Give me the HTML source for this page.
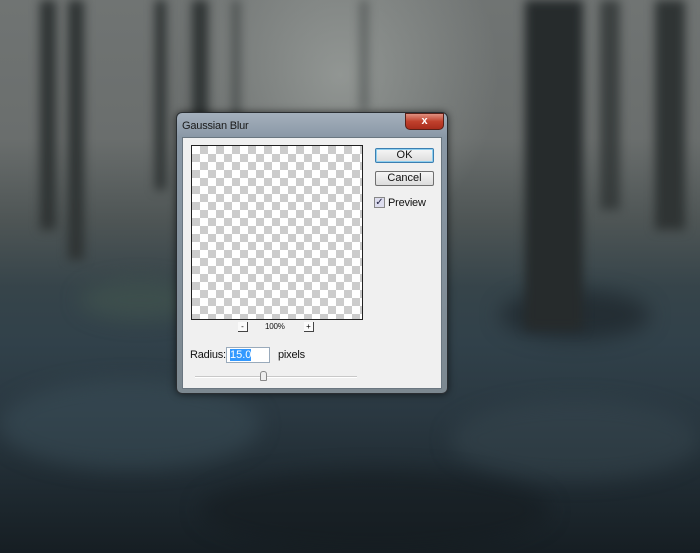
<!DOCTYPE html>
<html><head><style>
*{margin:0;padding:0;box-sizing:border-box}
body{width:700px;height:553px;overflow:hidden;position:relative;font-family:"Liberation Sans",sans-serif;
background:linear-gradient(180deg,#707473 0%,#6a6e6d 25%,#4e5555 40%,#36444a 52%,#31414a 62%,#2a3841 75%,#1f2a31 88%,#161e23 100%);}
.fog{position:absolute;left:180px;top:0;width:320px;height:250px;background:radial-gradient(ellipse at center 30%,rgba(190,195,190,.45),rgba(150,155,150,0) 70%)}
.p{position:absolute;border-radius:50%;filter:blur(10px)}
.t{position:absolute;top:0;background:#2f3434;filter:blur(5px)}
.dlg{position:absolute;left:176px;top:112px;width:272px;height:282px;border-radius:6px;
background:linear-gradient(180deg,#a4b0bc 0,#8a98a6 24px,#7c8890 100%);border:1px solid #2a2e32;box-shadow:0 0 8px rgba(0,0,0,.6)}
.title{position:absolute;left:5px;top:7px;font-size:11px;color:#1a1a1a;letter-spacing:-0.2px}
.close{position:absolute;left:228px;top:0;width:39px;height:17px;border-radius:0 0 5px 5px;background:linear-gradient(#e09080,#c0402c 50%,#a82c1c);border:1px solid #5a2018;color:#fff;font-size:11px;font-weight:bold;text-align:center;line-height:15px}
.client{position:absolute;left:5px;top:24px;width:260px;height:252px;background:#f0f0f0;border:1px solid #6a7680}
.prev{position:absolute;left:8px;top:7px;width:172px;height:175px;border:1px solid #222;
background-color:#fff;background-image:linear-gradient(45deg,#ccc 25%,transparent 25%,transparent 75%,#ccc 75%),linear-gradient(45deg,#ccc 25%,transparent 25%,transparent 75%,#ccc 75%);background-size:16px 16px;background-position:0 0,8px 8px}
.btn{position:absolute;left:192px;width:59px;height:15px;border:1px solid #707070;border-radius:2px;background:linear-gradient(#f6f6f6,#dcdcdc);font-size:11px;text-align:center;line-height:13px;color:#111}
.sq{position:absolute;width:10px;height:10px;background:#fafafa;border-right:1px solid #444;border-bottom:1px solid #444;font-size:8px;line-height:9px;text-align:center}
.s{position:absolute;font-size:11px;color:#111;letter-spacing:-0.2px}
</style></head><body>
<div class="fog"></div>
<div class="p" style="left:0;top:380px;width:260px;height:90px;background:rgba(60,80,90,.5)"></div>
<div class="p" style="left:450px;top:400px;width:250px;height:80px;background:rgba(55,72,80,.5)"></div>
<div class="p" style="left:80px;top:280px;width:120px;height:40px;background:rgba(70,90,80,.5)"></div>
<div class="p" style="left:500px;top:290px;width:150px;height:50px;background:rgba(25,32,36,.6)"></div>
<div class="p" style="left:200px;top:470px;width:350px;height:80px;background:rgba(20,26,30,.5)"></div>
<div class="t" style="left:40px;width:16px;height:230px"></div>
<div class="t" style="left:68px;width:16px;height:260px"></div>
<div class="t" style="left:155px;width:11px;height:190px"></div>
<div class="t" style="left:192px;width:16px;height:120px"></div>
<div class="t" style="left:232px;width:8px;height:120px;opacity:.6"></div>
<div class="t" style="left:360px;width:8px;height:110px;opacity:.5"></div>
<div class="t" style="left:525px;width:58px;height:330px;background:#262b2c"></div>
<div class="t" style="left:600px;width:20px;height:210px;opacity:.8"></div>
<div class="t" style="left:655px;width:30px;height:230px"></div>
<div class="dlg">
<div class="title">Gaussian Blur</div>
<div class="close">x</div>
<div class="client">
<div class="prev"></div>
<div class="btn" style="top:10px;border-color:#3c7fb1;box-shadow:inset 0 0 0 1px #8fd0f0">OK</div>
<div class="btn" style="top:33px">Cancel</div>
<div style="position:absolute;left:191px;top:59px;width:11px;height:11px;border:1px solid #888;background:#dde;font-size:10px;line-height:9px;color:#224;text-align:center">✓</div>
<div class="s" style="left:205px;top:59px">Preview</div>
<div class="sq" style="left:55px;top:184px">-</div>
<div class="s" style="left:82px;top:184px;font-size:8px">100%</div>
<div class="sq" style="left:121px;top:184px">+</div>
<div class="s" style="left:7px;top:211px">Radius:</div>
<div style="position:absolute;left:43px;top:209px;width:44px;height:16px;background:#fff;border:1px solid #9ab"><span style="position:absolute;left:3px;top:1px;background:#3399ff;color:#fff;font-size:11px;line-height:12px">15.0</span></div>
<div class="s" style="left:95px;top:211px">pixels</div>
<div style="position:absolute;left:12px;top:238px;width:162px;height:2px;background:#c8c8c8;border-bottom:1px solid #fff"></div>
<div style="position:absolute;left:77px;top:233px;width:7px;height:10px;border:1px solid #888;border-radius:3px 3px 1px 1px;background:#eee"></div>
</div></div>
</body></html>
